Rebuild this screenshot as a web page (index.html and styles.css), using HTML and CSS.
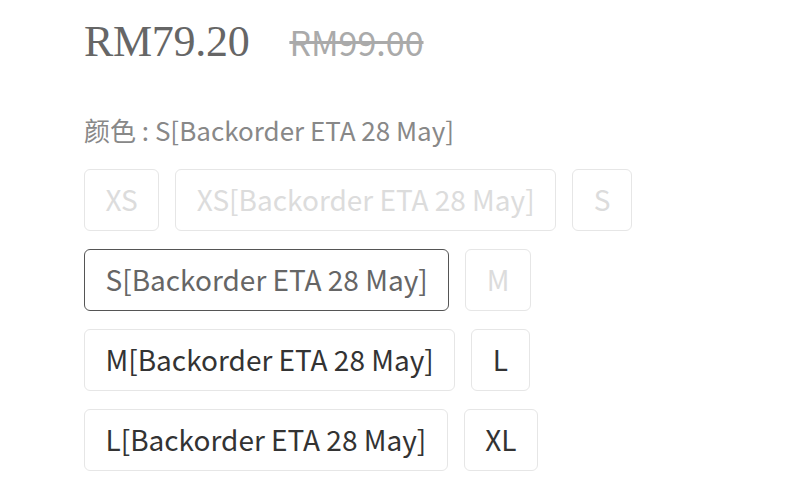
FILE: index.html
```html
<!DOCTYPE html>
<html>
<head>
<meta charset="utf-8">
<link rel="stylesheet" href="styles.css">
</head>
<body>
<div class="product">
  <div class="price">
    <span class="price-now">RM79.20</span>
    <span class="price-old">RM99.00</span>
  </div>
  <div class="label">颜色 : S[Backorder ETA 28 May]</div>
  <div class="options">
    <span class="opt disabled">XS</span>
    <span class="opt disabled">XS[Backorder ETA 28 May]</span>
    <span class="opt disabled">S</span>
    <span class="opt selected">S[Backorder ETA 28 May]</span>
    <span class="opt disabled">M</span>
    <span class="opt">M[Backorder ETA 28 May]</span>
    <span class="opt">L</span>
    <span class="opt">L[Backorder ETA 28 May]</span>
    <span class="opt">XL</span>
  </div>
</div>
</body>
</html>
```
FILE: styles.css
```css
html, body {
  margin: 0;
  padding: 0;
  background: #fff;
}
.product {
  padding: 16px 0 0 84px;
  font-family: "Noto Sans CJK SC", "Noto Sans", sans-serif;
}
.price {
  display: flex;
  align-items: baseline;
  gap: 40px;
  height: 64px;
}
.price-now {
  font-family: "Liberation Serif", serif;
  font-size: 44px;
  color: #666;
  letter-spacing: -0.3px;
}
.price-old {
  font-size: 34px;
  color: #aaa;
  text-decoration: line-through;
}
.label {
  margin-top: 34px;
  font-size: 26px;
  color: #888;
  line-height: 32px;
}
.options {
  display: flex;
  flex-wrap: wrap;
  gap: 18px 16px;
  margin-top: 23px;
  width: 560px;
}
.opt {
  box-sizing: border-box;
  height: 62px;
  padding: 0 20.5px;
  border: 1.5px solid #e6e6e6;
  border-radius: 6px;
  font-size: 28px;
  line-height: 59px;
  color: #333;
}
.opt.disabled {
  color: #dcdcdc;
}
.opt.selected {
  border: 1.5px solid #555;
  color: #666;
}
```
